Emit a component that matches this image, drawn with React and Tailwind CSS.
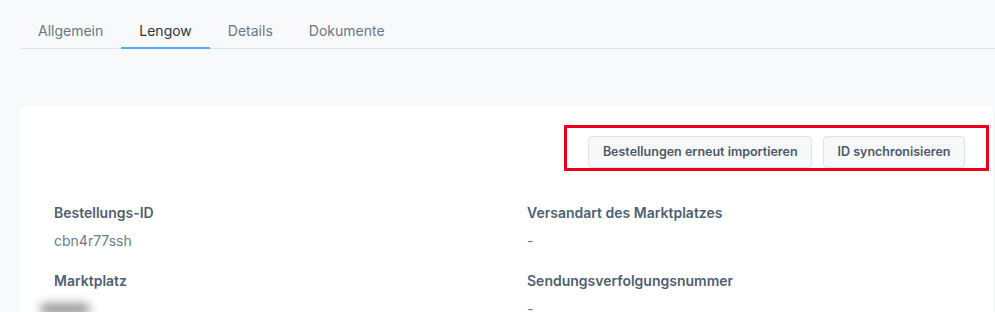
const tabs = ["Allgemein", "Lengow", "Details", "Dokumente"];

function Field({ label, children }) {
  return (
    <div className="flex flex-col">
      <p className="text-[14px] leading-[20px] font-semibold text-[#505f70]">{label}</p>
      <div className="mt-[8px] h-[20px] text-[14px] leading-[20px] text-[#6b7b8c]">{children}</div>
    </div>
  );
}

export default function App() {
  return (
    <main
      className="h-[312px] w-full overflow-hidden bg-[#f8f9fb]"
      style={{ fontFamily: "Inter, 'Noto Sans', sans-serif" }}
    >
      <nav className="ml-[20px] flex border-b border-[#dde3ea] pt-[21px]">
        {tabs.map((tab) => (
          <div
            key={tab}
            className={
              tab === "Lengow"
                ? "-mb-px border-b-2 border-[#5aaaf0] px-[18px] pb-[6px] text-[14px] leading-[20px] text-[#2d3640]"
                : "-mb-px border-b-2 border-transparent px-[18px] pb-[6px] text-[14px] leading-[20px] text-[#6b7785]"
            }
          >
            {tab}
          </div>
        ))}
      </nav>

      <section className="ml-[20px] mr-[2px] mt-[57px] h-[220px] rounded-[8px] bg-white pl-[34px] pt-[19px]">
        <div className="flex justify-end pr-[4px]">
          <div className="flex gap-[11px] border-[3px] border-[#e8001c] px-[21px] pb-0 pt-[8px]">
            <button className="h-[32px] rounded-[4px] border border-[#dfe3e8] bg-[#f7f8fa] px-[13.5px] text-[12.5px] font-semibold text-[#4d5867]">
              Bestellungen erneut importieren
            </button>
            <button className="h-[32px] rounded-[4px] border border-[#dfe3e8] bg-[#f7f8fa] px-[13.5px] text-[12.5px] font-semibold text-[#4d5867]">
              ID synchronisieren
            </button>
          </div>
        </div>

        <div className="mt-[32px] grid grid-cols-[473px_1fr] gap-y-[20px]">
          <Field label="Bestellungs-ID">cbn4r77ssh</Field>
          <Field label="Versandart des Marktplatzes">-</Field>
          <Field label="Marktplatz">
            <div className="ml-[-14px] mt-[4px] h-[12px] w-[50px] rounded-full bg-[#9a9a9a] blur-[5px]" />
          </Field>
          <Field label="Sendungsverfolgungsnummer">-</Field>
        </div>
      </section>
    </main>
  );
}
